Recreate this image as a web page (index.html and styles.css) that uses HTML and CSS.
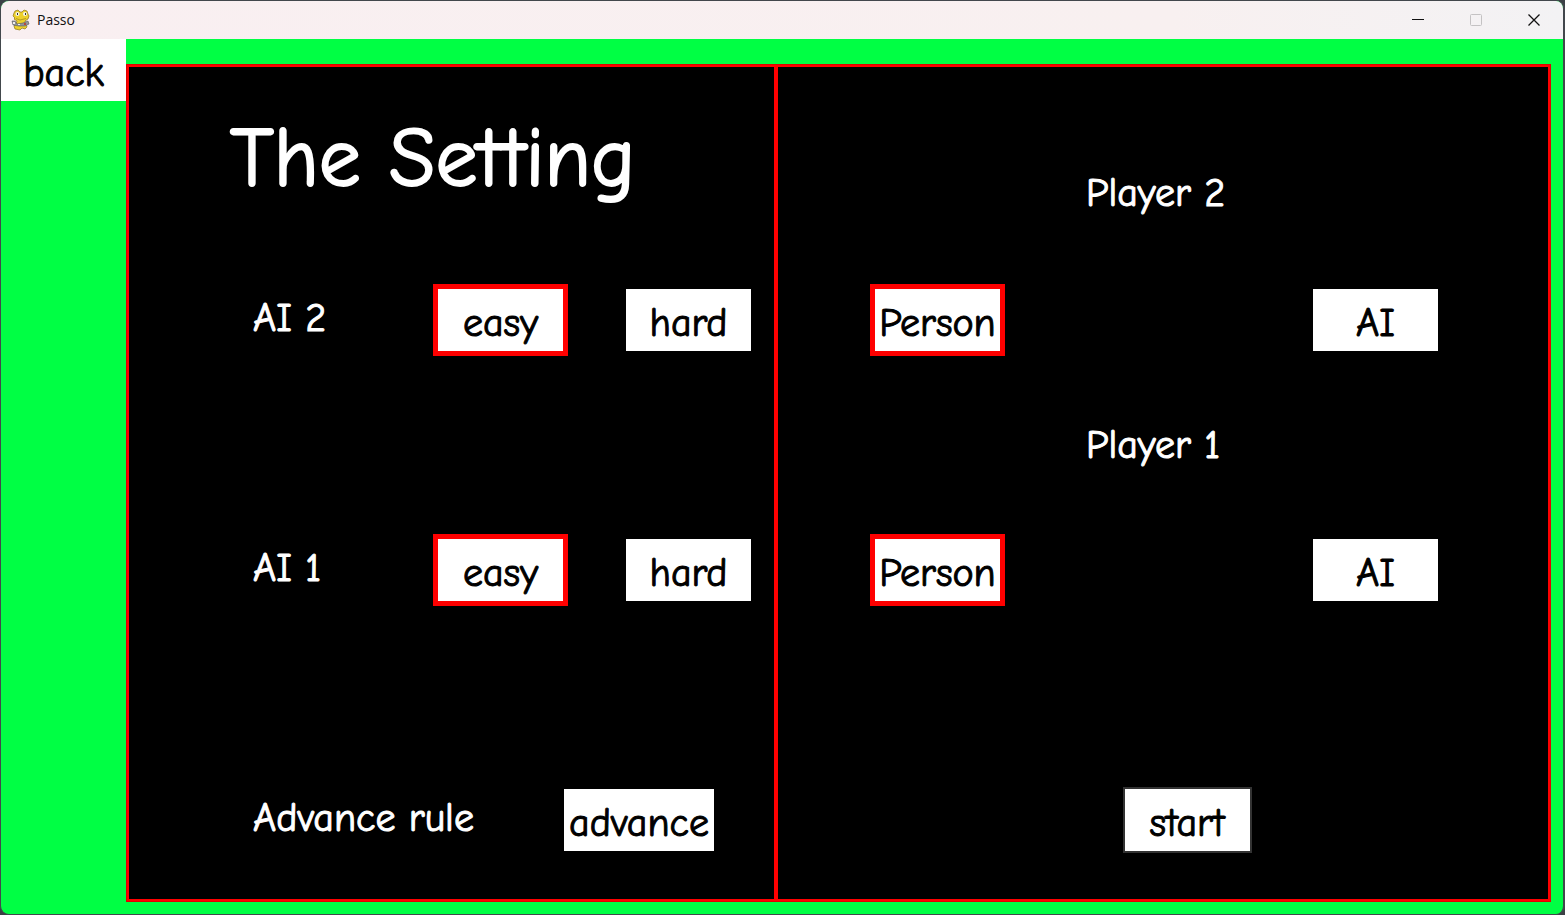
FILE: index.html
```html
<!DOCTYPE html>
<html lang="en">
<head>
<meta charset="utf-8">
<meta name="viewport" content="width=device-width, initial-scale=1">
<title>Passo</title>
<link rel="stylesheet" href="styles.css">
</head>
<body>
<div class="window">
  <header class="titlebar">
    <svg class="app-icon" viewBox="0 0 20 22" aria-hidden="true">
      <path d="M4 9 2 7 3 4 4 2 7 1 9 3 11 3 13 1 16 2 17 5 18 7 17 10 14 12 15 15 16 18 14 20 11 19 9 21 4 20 3 17 5 15 6 12 3 10Z" fill="#ecd02c" stroke="#8c7418" stroke-width=".7"/>
      <path d="M5 9.500 9 11 15 9.500" fill="none" stroke="#a88c1c" stroke-width=".8"/>
      <circle cx="6.500" cy="5" r="2" fill="#f3f3ee"/><circle cx="14" cy="5" r="2" fill="#f3f3ee"/>
      <path d="M6 4h1v2H6zM14 4h1v2h-1z" fill="#333"/>
      <path d="M1 12 4 12 6 15 12 14 17 12 18 15 14 17 8 17 2 16Z" fill="#92969a" stroke="#55585c" stroke-width=".6"/>
      <path d="M2 13h2v2H2zM7 15h2v1H7z" fill="#eee"/><path d="M13 14h2v2h-2z" fill="#b54a42"/>
    </svg>
    <span class="app-name">Passo</span>
    <div class="controls">
      <button class="control" aria-label="Minimize"><svg viewBox="0 0 12 12"><path d="M0 5.5h12"/></svg></button>
      <button class="control" aria-label="Maximize" disabled><svg viewBox="0 0 12 12"><rect x=".5" y=".5" width="11" height="11" rx="1"/></svg></button>
      <button class="control" aria-label="Close"><svg viewBox="0 0 12 12"><path stroke-width="1.3" d="m.5.5 11 11m0-11-11 11"/></svg></button>
    </div>
  </header>
  <main class="game">
    <nav class="side"><button class="btn">back</button></nav>
    <div class="board">
      <section class="panel settings">
        <h1 class="title">The Setting</h1>
        <div class="row ai-two"><span class="label">AI 2</span><button class="btn selected" aria-pressed="true">easy</button><button class="btn">hard</button></div>
        <div class="row ai-one"><span class="label">AI 1</span><button class="btn selected" aria-pressed="true">easy</button><button class="btn">hard</button></div>
        <div class="row rule"><span class="label">Advance rule</span><button class="btn wide">advance</button></div>
      </section>
      <section class="panel players">
        <h2 class="player player-two">Player 2</h2>
        <div class="choice ai-two"><button class="btn selected" aria-pressed="true">Person</button><button class="btn">AI</button></div>
        <h2 class="player player-one">Player 1</h2>
        <div class="choice ai-one"><button class="btn selected" aria-pressed="true">Person</button><button class="btn">AI</button></div>
        <div class="rule launch"><button class="btn start">start</button></div>
      </section>
    </div>
  </main>
</div>
</body>
</html>
```
FILE: styles.css
```css
* { box-sizing: border-box; }
body {
  margin: 0;
  background: #3c4146;
  font-family: "Comic Sans MS", "Comic Neue", "Noto Sans", sans-serif;
  font-variant-ligatures: none;
}
.window {
  display: flex;
  flex-direction: column;
  min-height: 100vh;
  border: 1px solid #42474c;
  border-right-width: 2px;
  border-radius: 9px;
  overflow: hidden;
  background: #00ff44;
}
.titlebar {
  display: flex;
  align-items: center;
  height: 38px;
  padding-left: 10px;
  background: linear-gradient(90deg, #f9eff1, #f8f0f0 75%, #f3f2f4);
}
.app-icon { width: 20px; height: 22px; }
.app-name {
  margin-left: 6px;
  font: 14px/20px "Open Sans", sans-serif;
  color: #111;
}
.controls { display: flex; margin-left: auto; }
.control {
  display: grid;
  place-items: center;
  width: 58px;
  height: 38px;
  padding: 0;
  border: 0;
  background: none;
  color: #111;
}
.control:disabled { color: #c4c2c3; }
.control svg { width: 12px; height: 12px; fill: none; stroke: currentColor; }
.game { display: flex; flex: 1; }
.side { flex: none; width: 125px; }
.board {
  display: grid;
  grid-template-columns: 649fr 774fr;
  flex: 1;
  margin: 25px 12px 12px 0;
  border: 1px solid #e00000;
}
.panel {
  display: grid;
  grid-template-rows: 222fr 62px 188fr 62px 188fr 62px 48fr;
  border: 2px solid #ff0000;
  background: #000;
  color: #fff;
}
.title {
  margin: 0;
  padding: 40px 0 0 101px;
  font-size: 84px;
  font-weight: 400;
  line-height: 104px;
  white-space: nowrap;
  -webkit-text-stroke: 2px;
}
.ai-two { grid-row: 2; }
.ai-one { grid-row: 4; }
.rule { grid-row: 6; }
.row { display: flex; gap: 63px; padding: 0 23px 0 124px; }
.label {
  flex: 1;
  font-size: 40px;
  line-height: 58px;
  white-space: nowrap;
}
.label, .player, .btn { -webkit-text-stroke: 1px; }
.row.rule { padding-right: 60px; }
.btn {
  flex: none;
  width: 125px;
  height: 62px;
  padding: 6px 0 0;
  border: 0;
  background: #fff;
  color: #000;
  font: inherit;
  font-size: 40px;
  font-variant-ligatures: none;
  line-height: 56px;
}
.selected { outline: 5px solid #ff0000; }
.wide { width: 150px; }
.choice {
  display: flex;
  justify-content: space-between;
  padding: 0 110px 0 97px;
}
.player {
  align-self: center;
  margin: 0;
  padding-left: 40%;
  font-size: 40px;
  font-weight: 400;
  line-height: 52px;
}
.player-two { grid-row: 1; padding-top: 30px; }
.player-one { grid-row: 3; }
.launch { padding-left: 45%; }
.start { outline: 2px solid #333; }
```
